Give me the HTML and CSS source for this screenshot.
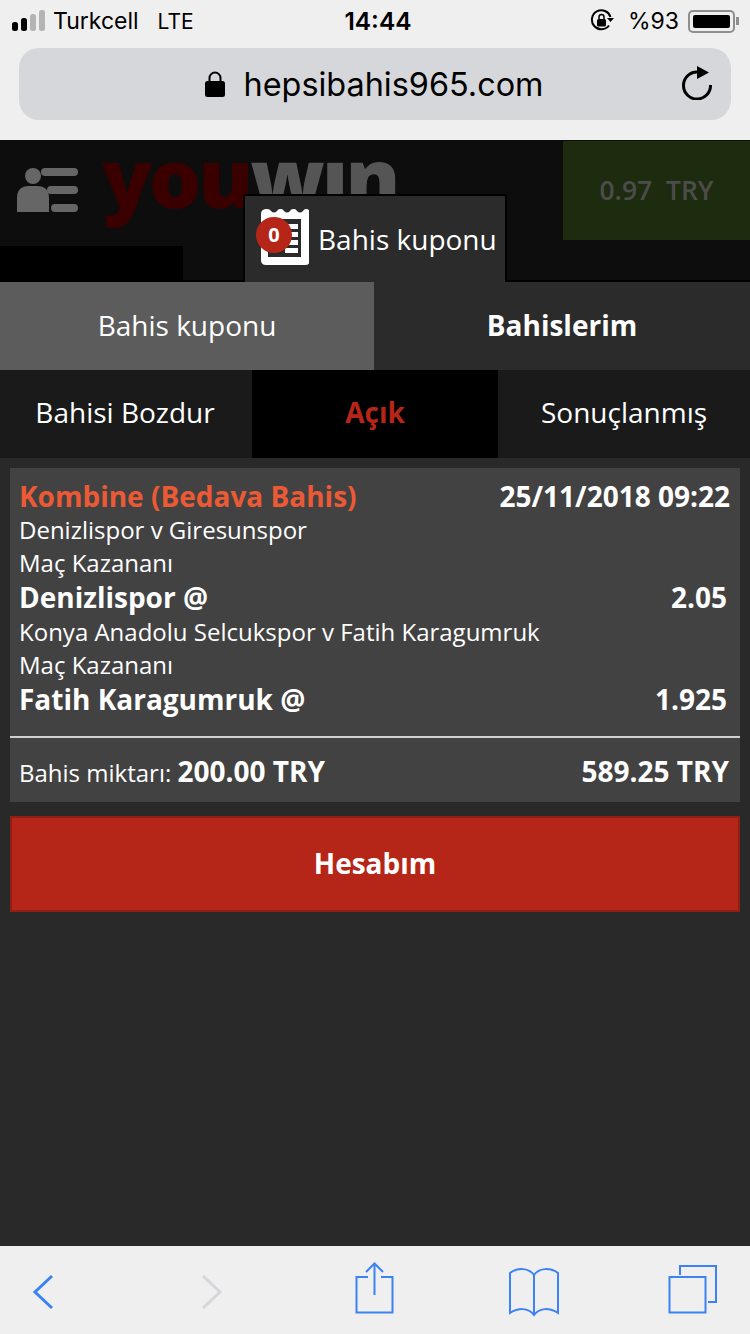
FILE: index.html
```html
<!DOCTYPE html>
<html lang="en">

<head>
    <meta charset="UTF-8">
    <meta name="viewport" content="width=device-width, initial-scale=1.0">
    <title>Bahis kuponu</title>
    <link rel="stylesheet" href="styles.css">
</head>

<body>
    <div class="browserTop">
        <div class="statusBar">
            <div class="statusLeft">
                <svg class="signal" width="34" height="22" viewBox="0 0 34 22">
                    <rect x="0" y="12" width="6" height="9" rx="2.5" fill="#000"/>
                    <rect x="9" y="8" width="6" height="13" rx="2.5" fill="#000"/>
                    <rect x="18" y="4" width="6" height="17" rx="2.5" fill="#b4b4b4"/>
                    <rect x="27" y="0" width="6" height="21" rx="2.5" fill="#b4b4b4"/>
                </svg>
                <span class="carrier">Turkcell</span>
                <span class="network">LTE</span>
            </div>
            <div class="clock">14:44</div>
            <div class="statusRight">
                <svg width="24" height="24" viewBox="0 0 24 24">
                    <path d="M19 16.5A9.5 9.5 0 1 1 20.5 8" fill="none" stroke="#000" stroke-width="2"/>
                    <path d="M17 9h7l-3.5 4z" fill="#000"/>
                    <rect x="7" y="10" width="9" height="7.5" rx="1.5" fill="#000"/>
                    <path d="M9 10V8a2.500 2.500 0 0 1 5 0v2" fill="none" stroke="#000" stroke-width="1.500"/>
                </svg>
                <span class="percent">%93</span>
                <div class="battery"><div class="batteryFill"></div></div>
                <div class="batteryTip"></div>
            </div>
        </div>
        <div class="urlBar">
            <svg class="lock" width="20" height="28" viewBox="0 0 20 28">
                <path d="M4.500 13V8a5.500 5.500 0 0 1 11 0v5" fill="none" stroke="#000" stroke-width="2"/>
                <rect x="0" y="11" width="20" height="16" rx="2.500" fill="#000"/>
            </svg>
            <span class="urlText">hepsibahis965.com</span>
            <svg class="reload" width="30" height="34" viewBox="0 0 30 34">
                <path d="M15 6A13.500 13.500 0 1 0 28.500 19" fill="none" stroke="#000" stroke-width="3"/>
                <path d="M15 0l12 6.500-12 6.500z" fill="#000"/>
            </svg>
        </div>
    </div>

    <div class="siteHeader">
        <div class="headerTop">
            <svg class="userMenu" width="62" height="46" viewBox="0 0 62 46">
                <circle cx="16" cy="8" r="8" fill="#666"/>
                <path d="M0 44V30q0-12 12-12h8q12 0 12 12v14z" fill="#666"/>
                <rect x="24" y="0" width="37" height="8" rx="4" fill="#666"/>
                <rect x="30" y="18" width="31" height="8" rx="4" fill="#666"/>
                <rect x="34" y="36" width="27" height="8" rx="4" fill="#666"/>
            </svg>
            <div class="logo"><span class="logoRed">you</span><span class="logoGrey">wın</span></div>
            <div class="balance">0.97&nbsp; TRY</div>
        </div>
        <div class="headerBlock"></div>
        <div class="couponTab">
            <div class="couponIcon">
                <svg width="48" height="57" viewBox="0 0 48 57">
                    <path d="M6 1q3 0 4 2 3 3 6 0 1-2 3-2h1q2 0 3 2 3 3 6 0 1-2 3-2h1q2 0 3 2 3 3 6 0 1-2 3-2 4 0 4 5v46q0 5-5 5H5q-5 0-5-5V6q0-5 6-5z" fill="#fff"/>
                    <rect x="7" y="11" width="33" height="38" fill="#2b2b2b"/>
                    <rect x="24" y="16" width="13" height="5" fill="#fff"/>
                    <rect x="24" y="24" width="13" height="5" fill="#fff"/>
                    <rect x="24" y="32" width="13" height="5" fill="#fff"/>
                    <rect x="24" y="40" width="13" height="5" fill="#fff"/>
                </svg>
                <span class="couponCount">0</span>
            </div>
            <span class="couponLabel">Bahis kuponu</span>
        </div>
    </div>

    <div class="mainTabs">
        <div class="mainTab">Bahis kuponu</div>
        <div class="mainTab active">Bahislerim</div>
    </div>

    <div class="subTabs">
        <div class="subTab first">Bahisi Bozdur</div>
        <div class="subTab open">Açık</div>
        <div class="subTab last">Sonuçlanmış</div>
    </div>

    <div class="content">
        <div class="betCard">
            <div class="betHead">
                <span class="betType">Kombine (Bedava Bahis)</span>
                <span class="betDate">25/11/2018 09:22</span>
            </div>
            <div class="betLine">Denizlispor v Giresunspor</div>
            <div class="betLine">Maç Kazananı</div>
            <div class="betPick"><span>Denizlispor @</span><span>2.05</span></div>
            <div class="betLine">Konya Anadolu Selcukspor v Fatih Karagumruk</div>
            <div class="betLine">Maç Kazananı</div>
            <div class="betPick"><span>Fatih Karagumruk @</span><span>1.925</span></div>
            <div class="betFoot">
                <span class="stake">Bahis miktarı: <b>200.00 TRY</b></span>
                <b class="payout">589.25 TRY</b>
            </div>
        </div>
        <button type="button" class="accountBtn">Hesabım</button>
    </div>

    <div class="browserBottom">
        <svg class="navBack" width="24" height="36" viewBox="0 0 24 36">
            <path d="M21 2L4 18l17 16" fill="none" stroke="#3b82f6" stroke-width="3"/>
        </svg>
        <svg class="navForward" width="24" height="36" viewBox="0 0 24 36">
            <path d="M3 2l17 16L3 34" fill="none" stroke="#d5d6da" stroke-width="3"/>
        </svg>
        <svg class="navShare" width="40" height="52" viewBox="0 0 40 52">
            <path d="M13 15H1.500v35.500h36V15H26" fill="none" stroke="#3b82f6" stroke-width="2"/>
            <path d="M19.500 2v31M11 10l8.500-8.500L28 10" fill="none" stroke="#3b82f6" stroke-width="2"/>
        </svg>
        <svg class="navBook" width="52" height="50" viewBox="0 0 52 50">
            <path d="M26 8C21 1 10 0 2 6v40c8-5 18-6 24 2 6-8 16-7 24-2V6C42 0 31 1 26 8zv40" fill="none" stroke="#3b82f6" stroke-width="2"/>
        </svg>
        <svg class="navTabs" width="50" height="50" viewBox="0 0 50 50">
            <path d="M12 11V2h36v36h-8" fill="none" stroke="#3b82f6" stroke-width="2"/>
            <rect x="1.500" y="13" width="36" height="35.500" fill="none" stroke="#3b82f6" stroke-width="2"/>
        </svg>
    </div>
</body>

</html>
```
FILE: styles.css
```css
* {
    box-sizing: border-box;
}

body {
    margin: 0;
    width: 750px;
    height: 1334px;
    display: flex;
    flex-direction: column;
    overflow: hidden;
    background-color: #292929;
    color: #fff;
    font-family: "Open Sans", sans-serif;
}

.browserTop {
    height: 140px;
    background-color: #efefef;
    color: #000;
    font-family: Inter, "Liberation Sans", sans-serif;
}

.statusBar {
    height: 42px;
    padding: 0 11px 0 12px;
    display: grid;
    grid-template-columns: 1fr auto 1fr;
    align-items: center;
}

.statusLeft {
    display: flex;
    align-items: center;
    font-size: 23px;
}

.signal {
    margin-right: 7px;
}

.network {
    margin-left: 19px;
    font-size: 21px;
}

.clock {
    margin-left: 5px;
    font-size: 24.5px;
    font-weight: 600;
}

.statusRight {
    display: flex;
    align-items: center;
    justify-content: flex-end;
    font-size: 23px;
}

.percent {
    margin: 0 9px 0 14px;
}

.battery {
    width: 47px;
    height: 23px;
    padding: 3px;
    border: 2px solid #8e8e8e;
    border-radius: 5px;
}

.batteryFill {
    height: 100%;
    background-color: #000;
    border-radius: 2px;
}

.batteryTip {
    width: 3px;
    height: 8px;
    margin-left: 1px;
    background-color: #8e8e8e;
}

.urlBar {
    position: relative;
    height: 72px;
    margin: 6px 19px 0;
    padding-right: 2px;
    background-color: #d6d7db;
    border-radius: 20px;
    display: flex;
    align-items: center;
    justify-content: center;
    font-size: 32.4px;
}

.lock {
    margin-right: 19px;
}

.reload {
    position: absolute;
    right: 19px;
    top: 18px;
}

.siteHeader {
    position: relative;
    height: 142px;
    background-color: #0d0d0d;
    border-bottom: 2px solid #000;
}

.headerTop {
    height: 106px;
    display: flex;
    align-items: flex-start;
}

.userMenu {
    margin: 28px 0 0 17px;
}

.logo {
    margin: -6px 0 0 23px;
    font-size: 82px;
    line-height: 84px;
    font-weight: 800;
    letter-spacing: -3px;
}

.logoRed {
    color: #3a0000;
}

.logoGrey {
    color: #555;
}

.balance {
    margin: 1px 0 0 auto;
    width: 187px;
    height: 99px;
    background-color: #1d2c0e;
    color: #4c4c4c;
    font-size: 26.5px;
    font-weight: 600;
    display: flex;
    align-items: center;
    justify-content: center;
    padding-bottom: 2px;
}

.headerBlock {
    width: 183px;
    height: 34px;
    background-color: #000;
}

/* coupon tab sits over the dimmed header */
.couponTab {
    position: absolute;
    left: 243px;
    top: 54px;
    width: 264px;
    height: 88px;
    background-color: #2b2b2b;
    border: 2px solid #000;
    border-bottom: 0;
    display: flex;
    align-items: center;
    padding: 0 0 0 16px;
}

.couponIcon {
    position: relative;
    width: 48px;
    height: 57px;
    margin: -6px 9px 0 0;
}

.couponCount {
    position: absolute;
    left: -5px;
    top: 9px;
    width: 36px;
    height: 36px;
    border-radius: 50%;
    background-color: #b52518;
    font-size: 20px;
    font-weight: 700;
    line-height: 36px;
    text-align: center;
}

.couponLabel {
    font-size: 28px;
}

.mainTabs {
    height: 88px;
    display: flex;
    background-color: #2b2b2b;
}

.mainTab {
    width: 374px;
    display: flex;
    align-items: center;
    justify-content: center;
    font-size: 28px;
    background-color: #5c5c5c;
    padding-bottom: 2px;
}

.mainTab.active {
    flex: 1;
    background-color: #2b2b2b;
    font-weight: 700;
}

.subTabs {
    height: 88px;
    display: flex;
    background-color: #1a1a1a;
    font-size: 28px;
}

.subTab {
    display: flex;
    align-items: center;
    justify-content: center;
    padding-bottom: 4px;
}

.subTab.first {
    width: 252px;
    padding-right: 2px;
}

.subTab.open {
    width: 246px;
    background-color: #000;
    color: #b52518;
    font-weight: 700;
}

.subTab.last {
    flex: 1;
}

.content {
    flex: 1;
    padding: 10px 10px 0;
}

.betCard {
    height: 334px;
    background-color: #424242;
    padding: 12px 0 0;
}

.betHead,
.betPick,
.betFoot {
    display: flex;
    justify-content: space-between;
}

.betHead {
    padding: 0 10px 0 9px;
    height: 33px;
    line-height: 33px;
    font-size: 28px;
    font-weight: 700;
}

.betType {
    color: #ec5a35;
}

.betLine {
    padding: 0 9px;
    height: 33px;
    line-height: 34px;
    font-size: 24px;
}

.betPick {
    padding: 0 13px 0 9px;
    height: 36px;
    line-height: 36px;
    font-size: 28px;
    font-weight: 700;
}

.betFoot {
    margin-top: 19px;
    padding: 14px 11px 0 9px;
    border-top: 2px solid #d0d0d0;
    font-size: 24px;
    line-height: 38px;
    align-items: baseline;
}

.stake b,
.payout {
    font-size: 28px;
    font-weight: 700;
}

.accountBtn {
    display: block;
    width: 730px;
    height: 96px;
    margin-top: 14px;
    padding-bottom: 4px;
    background-color: #b52518;
    border: 2px solid #8f1f14;
    color: #fff;
    font-family: "Open Sans", sans-serif;
    font-size: 28px;
    font-weight: 700;
}

.browserBottom {
    height: 88px;
    padding-left: 31px;
    background-color: #efefef;
    display: flex;
    align-items: flex-start;
}

.navBack {
    margin-top: 28px;
}

.navForward {
    margin: 28px 0 0 145px;
}

.navShare {
    margin: 16px 0 0 131px;
}

.navBook {
    margin: 21px 0 0 113px;
}

.navTabs {
    margin: 18px 0 0 108px;
}
```
